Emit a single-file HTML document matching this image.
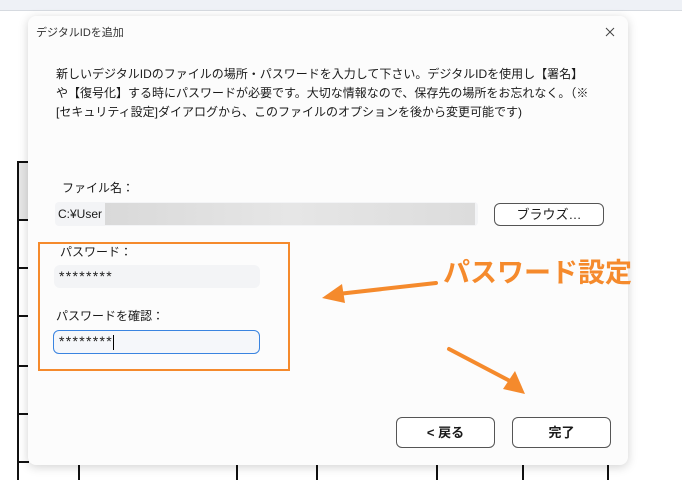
<!DOCTYPE html>
<html><head><meta charset="utf-8"><style>
*{margin:0;padding:0;box-sizing:border-box}
body{width:682px;height:480px;overflow:hidden;background:#fff;position:relative;font-family:"Liberation Sans","Noto Sans CJK JP",sans-serif;color:#1a1a1a}
.a{position:absolute}
.dlg{left:28px;top:16px;width:600px;height:449px;background:#fcfcfc;border-radius:8px;box-shadow:0 2px 10px rgba(0,0,0,.18)}
.t{font-size:12px;white-space:nowrap}
.btn{border:1px solid #555;border-radius:6px;background:#fff;font-size:13px;font-weight:bold;text-align:center}
</style></head><body>
<div class="a" style="left:0;top:0;width:682px;height:11px;background:#eef1f6;border-bottom:1px solid #d6dae0"></div>
<div class="a" style="left:17px;top:161px;width:2px;height:319px;background:#111"></div>
<div class="a" style="left:17px;top:161px;width:12px;height:2px;background:#111"></div>
<div class="a" style="left:19px;top:163px;width:10px;height:57px;background:#e6e6e6"></div>
<div class="a" style="left:17px;top:219px;width:12px;height:2px;background:#111"></div>
<div class="a" style="left:17px;top:267px;width:12px;height:2px;background:#111"></div>
<div class="a" style="left:17px;top:315px;width:12px;height:2px;background:#111"></div>
<div class="a" style="left:17px;top:365px;width:12px;height:2px;background:#111"></div>
<div class="a" style="left:17px;top:413px;width:12px;height:2px;background:#111"></div>
<div class="a" style="left:17px;top:461px;width:12px;height:2px;background:#111"></div>
<div class="a" style="left:78px;top:465px;width:2px;height:15px;background:#111"></div>
<div class="a" style="left:236px;top:465px;width:2px;height:15px;background:#111"></div>
<div class="a" style="left:316px;top:465px;width:2px;height:15px;background:#111"></div>
<div class="a" style="left:436px;top:465px;width:2px;height:15px;background:#111"></div>
<div class="a" style="left:522px;top:465px;width:2px;height:15px;background:#111"></div>
<div class="a" style="left:607px;top:465px;width:2px;height:15px;background:#111"></div>
<div class="a dlg"></div>
<div class="a t" style="left:36px;top:24px;font-size:11px;color:#333">デジタルIDを追加</div>
<svg class="a" style="left:605px;top:27px" width="10" height="10"><path d="M1 1L9 9M9 1L1 9" stroke="#444" stroke-width="1"/></svg>
<div class="a t" style="left:56px;top:65px;line-height:19px">新しいデジタルIDのファイルの場所・パスワードを入力して下さい。デジタルIDを使用し【署名】<br>や【復号化】する時にパスワードが必要です。大切な情報なので、保存先の場所をお忘れなく。（※<br>[セキュリティ設定]ダイアログから、このファイルのオプションを後から変更可能です)</div>
<div class="a t" style="left:62px;top:179px">ファイル名：</div>
<div class="a" style="left:55px;top:202px;width:423px;height:24px;background:#f3f4f6;border-radius:4px"></div>
<div class="a" style="left:105px;top:203px;width:370px;height:22px;background:linear-gradient(90deg,#d9d9d9,#e6e6e6,#dcdcdc)"></div>
<div class="a t" style="left:58px;top:207px">C:¥User</div>
<div class="a btn" style="left:494px;top:203px;width:110px;height:23px;line-height:21px;font-weight:normal">ブラウズ…</div>
<div class="a" style="left:38px;top:242px;width:252px;height:129px;border:2px solid #f58a2c"></div>
<div class="a t" style="left:60px;top:243px">パスワード：</div>
<div class="a" style="left:54px;top:265px;width:206px;height:23px;background:#f3f4f6;border-radius:6px"></div>
<div class="a t" style="left:59px;top:268px;font-size:14px;letter-spacing:1.3px">********</div>
<div class="a t" style="left:56px;top:307px">パスワードを確認：</div>
<div class="a" style="left:53px;top:330px;width:207px;height:24px;background:#f5f7fa;border:1px solid #3a84e0;border-radius:6px"></div>
<div class="a t" style="left:59px;top:333px;font-size:14px;letter-spacing:1.3px">********<span style="border-left:1px solid #000;display:inline-block;height:15px;vertical-align:middle"></span></div>
<div class="a" style="left:443px;top:251px;font-size:27px;font-weight:bold;color:#f58a2c;white-space:nowrap">パスワード設定</div>
<svg class="a" style="left:0;top:0" width="682" height="480">
<line x1="436" y1="283" x2="338" y2="294" stroke="#f58a2c" stroke-width="4" stroke-linecap="round"/>
<polygon points="322,298 342,284 345,303" fill="#f58a2c"/>
<line x1="449" y1="349" x2="510" y2="381" stroke="#f58a2c" stroke-width="4" stroke-linecap="round"/>
<polygon points="525,394 503,389 515,371" fill="#f58a2c"/>
</svg>
<div class="a btn" style="left:396px;top:417px;width:99px;height:31px;line-height:29px">&lt; 戻る</div>
<div class="a btn" style="left:512px;top:417px;width:99px;height:31px;line-height:29px">完了</div>
</body></html>
